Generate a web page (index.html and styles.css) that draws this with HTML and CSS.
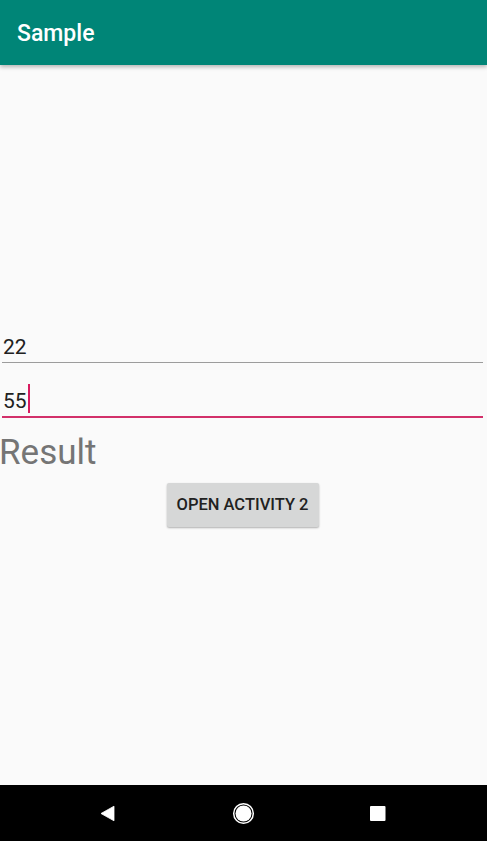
FILE: index.html
```html
<!DOCTYPE html>
<html>
<head>
<meta charset="utf-8">
<link rel="stylesheet" href="styles.css">
</head>
<body>
<div class="screen">
  <header class="appbar"><span class="title">Sample</span></header>
  <main class="content">
    <div class="field">22</div>
    <div class="field focused">55<span class="caret"></span></div>
    <div class="result">Result</div>
    <button class="btn">OPEN ACTIVITY 2</button>
  </main>
  <nav class="navbar">
    <svg class="nav-icon" width="28" height="28" viewBox="0 0 28 28"><path d="M21 7.2 L21 21.8 L8 14.5 Z" fill="#fff" stroke="#fff" stroke-width="0.8" stroke-linejoin="round"/></svg>
    <svg class="nav-icon" width="28" height="28" viewBox="0 0 28 28"><circle cx="14.5" cy="14.5" r="9.8" fill="none" stroke="#fff" stroke-width="1.5"/><circle cx="14.5" cy="14.5" r="8" fill="#fff"/></svg>
    <svg class="nav-icon" width="28" height="28" viewBox="0 0 28 28"><rect x="6" y="7" width="15.5" height="15" rx="1" fill="#fff"/></svg>
  </nav>
</div>
</body>
</html>
```
FILE: styles.css
```css
html, body {
  margin: 0;
  padding: 0;
}
body {
  background: #fafafa;
  font-family: Roboto, "Liberation Sans", sans-serif;
}
.screen {
  height: 841px;
  display: flex;
  flex-direction: column;
}
.appbar {
  height: 65px;
  flex: none;
  background: #008577;
  box-shadow: 0 2px 4px rgba(0, 0, 0, 0.28);
  display: flex;
  align-items: center;
  padding-left: 17px;
  position: relative;
  z-index: 1;
}
.title {
  color: #fff;
  font-size: 23px;
  font-weight: 500;
  line-height: 27px;
  margin-top: 1px;
}
.content {
  flex: 1;
  display: flex;
  flex-direction: column;
  padding-top: 270px;
}
.field {
  margin: 0 4px 0 2px;
  padding: 0 0 3px 1px;
  font-size: 21px;
  line-height: 24px;
  color: #212121;
  border-bottom: 1.5px solid #9c9c9c;
}
.field.focused {
  margin-top: 25.5px;
  border-bottom: 2px solid #d2306a;
}
.caret {
  display: inline-block;
  width: 2px;
  height: 29px;
  margin-top: -6px;
  margin-left: 1px;
  vertical-align: -5px;
  background: #d81b60;
}
.result {
  margin: 14px 0 0 -1px;
  font-size: 35px;
  line-height: 41px;
  color: #757575;
}
.btn {
  align-self: center;
  margin: 10px 0 0 -2px;
  width: 152px;
  height: 44px;
  padding: 0;
  border: none;
  border-radius: 2px;
  background: #d6d7d7;
  box-shadow: 0 1px 2px rgba(0, 0, 0, 0.3);
  font-family: Roboto, "Liberation Sans", sans-serif;
  font-size: 16.5px;
  font-weight: 500;
  color: #212121;
  line-height: 44px;
}
.navbar {
  height: 56px;
  flex: none;
  background: #000;
  display: flex;
  align-items: center;
  justify-content: center;
  gap: 107.5px;
  padding-right: 2px;
}
.nav-icon {
  display: block;
}
```
